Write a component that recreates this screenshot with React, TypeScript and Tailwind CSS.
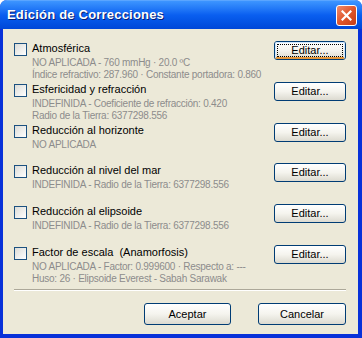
import React from 'react'

type Correction = {
  title: string
  lines: string[]
  height: string
}

const corrections: Correction[] = [
  {
    title: 'Atmosférica',
    lines: ['NO APLICADA - 760 mmHg · 20.0 ºC', 'Índice refractivo: 287.960 · Constante portadora: 0.860'],
    height: 'h-[41px]',
  },
  {
    title: 'Esfericidad y refracción',
    lines: ['INDEFINIDA - Coeficiente de refracción: 0.420', 'Radio de la Tierra: 6377298.556'],
    height: 'h-[41px]',
  },
  { title: 'Reducción al horizonte', lines: ['NO APLICADA'], height: 'h-[40px]' },
  {
    title: 'Reducción al nivel del mar',
    lines: ['INDEFINIDA - Radio de la Tierra: 6377298.556'],
    height: 'h-[41px]',
  },
  {
    title: 'Reducción al elipsoide',
    lines: ['INDEFINIDA - Radio de la Tierra: 6377298.556'],
    height: 'h-[41px]',
  },
  {
    title: 'Factor de escala  (Anamorfosis)',
    lines: ['NO APLICADA - Factor: 0.999600 · Respecto a: ---', 'Huso: 26 · Elipsoide Everest - Sabah Sarawak'],
    height: 'h-[42px]',
  },
]

function Checkbox() {
  return (
    <div className="w-[13px] h-[13px] shrink-0 border border-[#1c5180] bg-gradient-to-br from-[#dcdcd7] to-[#ffffff]" />
  )
}

function XpButton({ label, focused, className }: { label: string; focused?: boolean; className: string }) {
  return (
    <button
      className={`${className} relative rounded-[3px] border border-[#003c74] bg-gradient-to-b from-[#ffffff] via-[#f5f4ee] to-[#dcdad0] text-[11px] text-black leading-none`}
    >
      {focused && (
        <>
          <span className="absolute inset-0 rounded-[2px] border-t border-l border-r border-[#cee7ff] border-b-2 border-b-[#e5973b]" />
          <span className="absolute inset-[2px] border border-dotted border-black" />
        </>
      )}
      <span className="relative">{label}</span>
    </button>
  )
}

export default function App() {
  return (
    <div
      className="w-[362px] h-[338px] flex flex-col rounded-t-[7px] bg-[#0831d9] overflow-hidden"
      style={{ fontFamily: '"Liberation Sans", Arial, sans-serif' }}
    >
      {/* barra de título */}
      <div className="h-[29px] shrink-0 flex items-center justify-between pl-[7px] pr-[5px] bg-gradient-to-b from-[#3d95ff] via-[#0a5ff0] to-[#0047d8] border-t border-[#5aa5ff]">
        <span className="text-[13px] font-bold text-white [text-shadow:1px_1px_0_#0a1e72] tracking-[0.2px]">
          Edición de Correcciones
        </span>
        <div className="w-[21px] h-[21px] rounded-[3px] border border-white bg-gradient-to-br from-[#ef8a6a] via-[#e0562b] to-[#c63c16] flex items-center justify-center">
          <svg width="11" height="11" viewBox="0 0 11 11">
            <path d="M1.5 1.5 L9.5 9.5 M9.5 1.5 L1.5 9.5" stroke="white" strokeWidth="2.2" strokeLinecap="square" />
          </svg>
        </div>
      </div>

      {/* contenido */}
      <div className="flex-1 flex flex-col ml-[3px] mr-[4px] mb-[4px] bg-[#ece9d8] pt-[12px] pl-[11px] pr-[12px]">
        {corrections.map((c, i) => (
          <div key={c.title} className={`${c.height} flex items-start justify-between`}>
            <div className="flex flex-col">
              <div className="flex items-start gap-[5px]">
                <div className="mt-[2px]">
                  <Checkbox />
                </div>
                <span className="text-[11px] leading-[14px] text-black whitespace-pre">{c.title}</span>
              </div>
              <div className="pl-[18px] mt-[1px] flex flex-col">
                {c.lines.map((l) => (
                  <span key={l} className="text-[10px] leading-[12px] tracking-[-0.25px] text-[#8c8c8c] whitespace-nowrap">
                    {l}
                  </span>
                ))}
              </div>
            </div>
            <XpButton label="Editar..." focused={i === 0} className="w-[72px] h-[19px] shrink-0" />
          </div>
        ))}

        <div className="mt-[2px] h-[2px] border-t border-[#aca899] border-b border-b-white" />

        <div className="flex justify-end gap-[27px] mt-[12px]">
          <XpButton label="Aceptar" className="w-[87px] h-[22px]" />
          <XpButton label="Cancelar" className="w-[88px] h-[22px]" />
        </div>
      </div>
    </div>
  )
}
